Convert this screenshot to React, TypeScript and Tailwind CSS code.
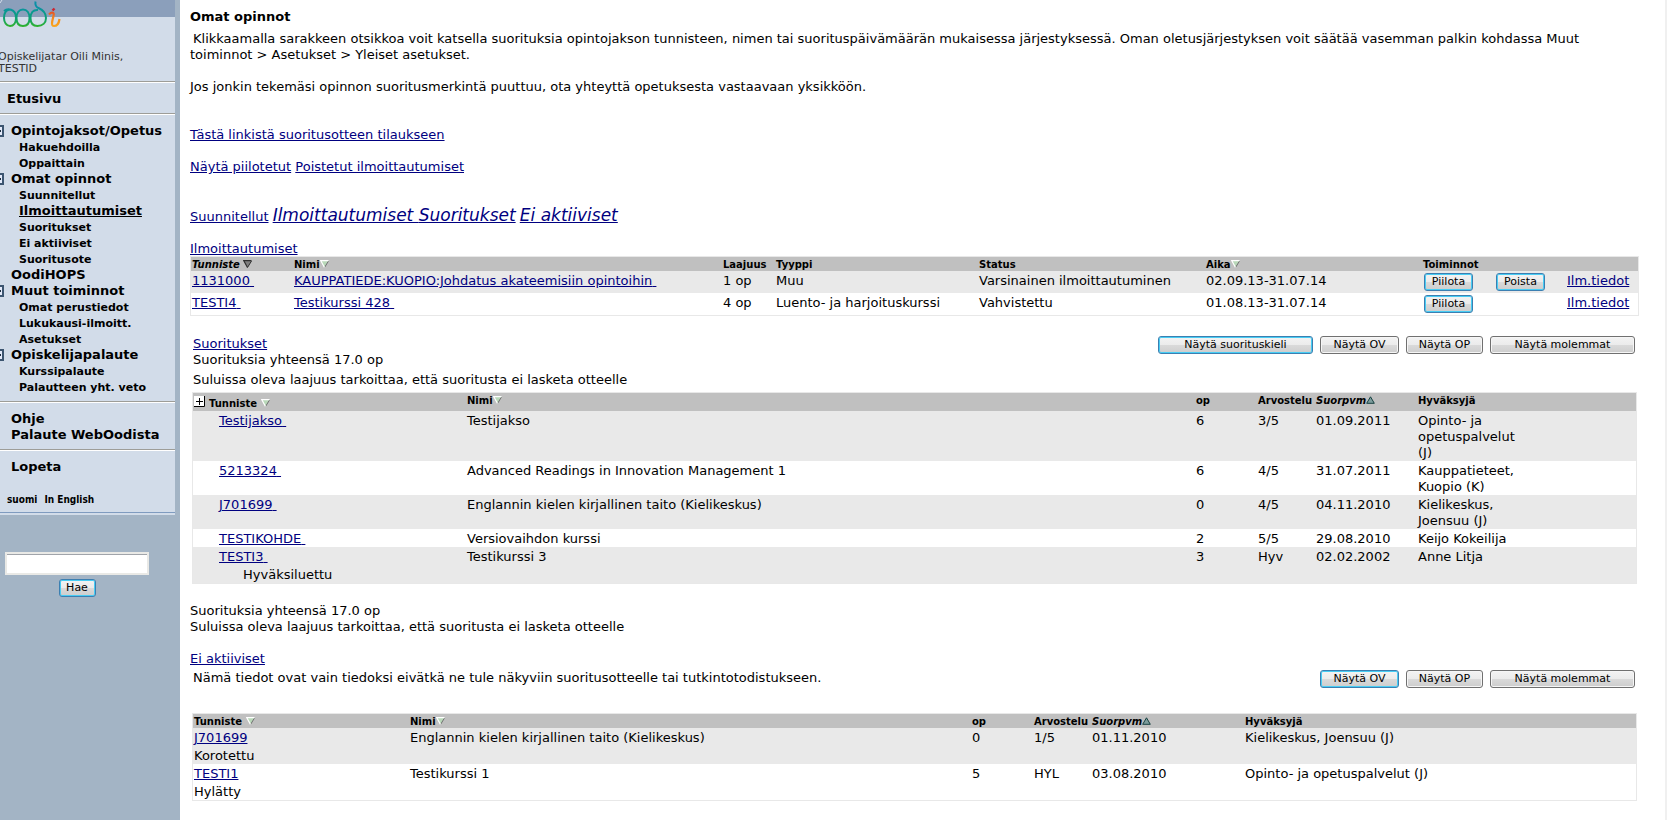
import React from "react";

const link = "text-[#000080] underline";
const head = "text-left align-top text-[10px] leading-[12px] font-bold whitespace-nowrap px-[2px] pt-[2px] first:pl-px";
const cell = "text-left align-top font-normal px-[2px] pt-[2px] first:pl-px";

function SortDown({ dark = false }: { dark?: boolean }) {
  return (
    <svg width="9" height="8" viewBox="0 0 9 8" className="inline-block align-baseline" aria-hidden="true">
      <path d="M0.5 0.5H8.5L4.5 7.5Z" fill={dark ? "#808080" : "#b9d8b9"} />
      <path d="M8.5 1L4.5 7.5" stroke={dark ? "#303030" : "#707070"} fill="none" />
      <path d="M8.5 0.6H0.7L4.5 7.5" stroke={dark ? "#303030" : "#ffffff"} strokeWidth="1.2" fill="none" />
    </svg>
  );
}

function SortUp() {
  return (
    <svg width="9" height="8" viewBox="0 0 9 8" className="inline-block align-baseline" aria-hidden="true">
      <path d="M4.5 0.8L8.3 7.3H0.7Z" fill="#7d9d9d" stroke="#174040" />
    </svg>
  );
}

function Button({ children, className = "", active = false }: { children: React.ReactNode; className?: string; active?: boolean }) {
  return (
    <button
      type="button"
      className={`h-[18px] rounded-[3px] border text-[11px] leading-[16px] whitespace-nowrap bg-[linear-gradient(#f3f3f3_0%,#ebebeb_50%,#dadada_50%,#cdcdcd_100%)] ${
        active ? "border-[#3c7fb1] shadow-[inset_0_0_0_1px_#48cdf4]" : "border-[#707070] shadow-[inset_0_0_0_1px_#f6f6f6]"
      } ${className}`}
    >
      {children}
    </button>
  );
}

function Logo() {
  return (
    <svg width="62" height="30" viewBox="0 0 62 30" className="block" role="img" aria-label="Oodi">
      <defs>
        <linearGradient id="loops" x1="0" y1="6" x2="0" y2="28" gradientUnits="userSpaceOnUse">
          <stop offset="0" stopColor="#0b90a8" />
          <stop offset="0.5" stopColor="#0aa07c" />
          <stop offset="1" stopColor="#35b420" />
        </linearGradient>
        <linearGradient id="tail" x1="0" y1="10" x2="0" y2="27" gradientUnits="userSpaceOnUse">
          <stop offset="0" stopColor="#e0452b" />
          <stop offset="0.5" stopColor="#f58a1c" />
          <stop offset="1" stopColor="#f9a820" />
        </linearGradient>
      </defs>
      <path d="M0 3L2 0" stroke="#d3dde9" fill="none" />
      <g fill="none" stroke="url(#loops)" strokeWidth="2">
        <path d="M4 11C7 8.500 16 8 16 18C16 23 13.500 26 10 26C6.500 26 4 22.500 4 18C4 13 6.500 10 9.500 9.500" />
        <path d="M16.500 18C16.500 13 19 9.500 23 9.500C27 9.500 29.500 13 29.500 18C29.500 23 27 26 23 26C19 26 16.500 23 16.500 18Z" />
        <path d="M38 10C33 9.500 30.500 13 30.500 18C30.500 23 33 26 37.500 26C42.500 26 46 23 46 18C46 12 42 9.500 38.500 8C36 7 35 5 35.500 1.500" />
      </g>
      <path d="M49 14.500C52 11.500 54.500 12.500 53.500 16C52.500 20 50.500 26 54 26C57 26 59 23 59.500 19" fill="none" stroke="url(#tail)" strokeWidth="2.2" />
      <path d="M52.500 10.500L54.500 8.500" stroke="#cc2430" strokeWidth="2.4" />
    </svg>
  );
}

function Fold() {
  return (
    <svg width="4" height="12" viewBox="0 0 4 12" className="mr-[7px] shrink-0" aria-hidden="true">
      <path d="M0 1H3V11H0" fill="#e3eafa" stroke="#3c5570" strokeWidth="2" />
      <path d="M0 6H1" stroke="#203040" strokeWidth="2" />
    </svg>
  );
}

type Item = { text: string; kind: "group" | "plain" | "sub" | "current" };
const menu: Item[] = [
  { text: "Opintojaksot/Opetus", kind: "group" },
  { text: "Hakuehdoilla", kind: "sub" },
  { text: "Oppaittain", kind: "sub" },
  { text: "Omat opinnot", kind: "group" },
  { text: "Suunnitellut", kind: "sub" },
  { text: "Ilmoittautumiset", kind: "current" },
  { text: "Suoritukset", kind: "sub" },
  { text: "Ei aktiiviset", kind: "sub" },
  { text: "Suoritusote", kind: "sub" },
  { text: "OodiHOPS", kind: "plain" },
  { text: "Muut toiminnot", kind: "group" },
  { text: "Omat perustiedot", kind: "sub" },
  { text: "Lukukausi-ilmoitt.", kind: "sub" },
  { text: "Asetukset", kind: "sub" },
  { text: "Opiskelijapalaute", kind: "group" },
  { text: "Kurssipalaute", kind: "sub" },
  { text: "Palautteen yht. veto", kind: "sub" },
];

const itemClass = {
  group: "text-[13px]",
  plain: "text-[13px] pl-[11px]",
  sub: "text-[11px] pl-[19px] pt-px",
  current: "text-[13px] pl-[19px] underline",
};

function Rule() {
  return <hr className="h-[2px] border-0 border-t border-t-[#9d9d98] bg-white" />;
}

function Sidebar() {
  return (
    <aside className="w-[180px] shrink-0 overflow-hidden bg-[#a3b4c5]">
      <div className="mr-[5px] border-b-2 border-[#d2dce9] bg-[#d2dce9]">
        <div className="border-b border-[#7f9bbf] bg-[linear-gradient(#8b9fbb_17px,transparent_17px)]">
          <div className="h-[51px]">
            <Logo />
          </div>
          <p className="-ml-[2px] h-[30px] text-[11px] leading-[12px] text-[#333]">
            Opiskelijatar Oili Minis,
            <br />
            TESTID
          </p>
          <Rule />
          <nav className="font-bold whitespace-nowrap">
            <a href="#etusivu" className="block h-[30px] pt-2 pl-[7px]">Etusivu</a>
            <Rule />
            <ul className="pt-2 pb-[6px]">
              {menu.map((m) => (
                <li key={m.text} className="h-4">
                  <a href="#valikko" className={`flex items-center ${itemClass[m.kind]}`}>
                    {m.kind === "group" && <Fold />}
                    {m.text}
                  </a>
                </li>
              ))}
            </ul>
            <Rule />
            <div className="flex flex-col pt-2 pb-[6px] pl-[11px]">
              <a href="#ohje">Ohje</a>
              <a href="#palaute">Palaute WebOodista</a>
            </div>
            <Rule />
            <a href="#lopeta" className="block pt-2 pl-[11px]">Lopeta</a>
            <div className="flex gap-[7px] pt-[17px] pb-[4px] pl-[7px] font-['DejaVu_Sans_Condensed','DejaVu_Sans',sans-serif] text-[10px]">
              <a href="#fi">suomi</a>
              <a href="#en">In English</a>
            </div>
          </nav>
        </div>
      </div>
      <form className="mt-[37px] ml-[5px] flex w-[144px] flex-col items-center" onSubmit={(e) => e.preventDefault()}>
        <input aria-label="Haku" type="text" className="h-[23px] w-full border-2 border-[#e9e9e6] bg-white px-1 shadow-[inset_0_1px_0_#a0a4aa]" />
        <Button active className="mt-1 w-[37px]">Hae</Button>
      </form>
    </aside>
  );
}

const enrolments = [
  { id: "1131000", name: "KAUPPATIEDE:KUOPIO:Johdatus akateemisiin opintoihin", size: "1 op", type: "Muu", status: "Varsinainen ilmoittautuminen", time: "02.09.13-31.07.14", removable: true },
  { id: "TESTI4", name: "Testikurssi 428", size: "4 op", type: "Luento- ja harjoituskurssi", status: "Vahvistettu", time: "01.08.13-31.07.14", removable: false },
];

const credits = [
  ["Testijakso", "Testijakso", "6", "3/5", "01.09.2011", "Opinto- ja opetuspalvelut (J)", ""],
  ["5213324", "Advanced Readings in Innovation Management 1", "6", "4/5", "31.07.2011", "Kauppatieteet, Kuopio (K)", ""],
  ["J701699", "Englannin kielen kirjallinen taito (Kielikeskus)", "0", "4/5", "04.11.2010", "Kielikeskus, Joensuu (J)", ""],
  ["TESTIKOHDE", "Versiovaihdon kurssi", "2", "5/5", "29.08.2010", "Keijo Kokeilija", ""],
  ["TESTI3", "Testikurssi 3", "3", "Hyv", "02.02.2002", "Anne Litja", "Hyväksiluettu"],
];

const inactive = [
  ["J701699", "Englannin kielen kirjallinen taito (Kielikeskus)", "0", "1/5", "01.11.2010", "Kielikeskus, Joensuu (J)", "Korotettu"],
  ["TESTI1", "Testikurssi 1", "5", "HYL", "03.08.2010", "Opinto- ja opetuspalvelut (J)", "Hylätty"],
];

export default function App() {
  return (
    <div className="flex min-h-screen bg-white font-['DejaVu_Sans',Verdana,sans-serif] text-[13px] leading-4 text-black">
      <Sidebar />
      <main className="min-w-0 flex-1 border-r-2 border-[#f0f0f0] pt-[9px] pr-[26px] pl-[10px]">
        <h1 className="font-bold">Omat opinnot</h1>
        <p className="mt-[6px] indent-[3px]">
          Klikkaamalla sarakkeen otsikkoa voit katsella suorituksia opintojakson tunnisteen, nimen tai suorituspäivämäärän
          mukaisessa järjestyksessä. Oman oletusjärjestyksen voit säätää vasemman palkin kohdassa Muut toiminnot &gt;
          Asetukset &gt; Yleiset asetukset.
        </p>
        <p className="mt-4">Jos jonkin tekemäsi opinnon suoritusmerkintä puuttuu, ota yhteyttä opetuksesta vastaavaan yksikköön.</p>
        <p className="mt-8"><a href="#tilaus" className={link}>Tästä linkistä suoritusotteen tilaukseen</a></p>
        <p className="mt-4">
          <a href="#piilotetut" className={link}>Näytä piilotetut</a> <a href="#poistetut" className={link}>Poistetut ilmoittautumiset</a>
        </p>
        <p className="mt-[30px] h-[20px] leading-[20px]">
          <a href="#suunnitellut" className={link}>Suunnitellut</a>{" "}
          <a href="#ilmoittautumiset" className={`${link} text-[17px] leading-[20px] italic`}>Ilmoittautumiset </a>
          <a href="#suoritukset" className={`${link} text-[17px] leading-[20px] italic`}>Suoritukset</a>{" "}
          <a href="#eiaktiiviset" className={`${link} text-[17px] leading-[20px] italic`}>Ei aktiiviset</a>
        </p>

        <h2 id="ilmoittautumiset" className="mt-4 h-[15px]"><a href="#ilmoittautumiset" className={link}>Ilmoittautumiset</a></h2>
        <table className="w-full table-fixed border-separate border-spacing-0 border border-[#e8e8e8]">
          <colgroup>
            <col className="w-[101px]" />
            <col />
            <col className="w-[53px]" />
            <col className="w-[203px]" />
            <col className="w-[227px]" />
            <col className="w-[217px]" />
            <col className="w-[72px]" />
            <col className="w-[72px]" />
            <col className="w-[73px]" />
          </colgroup>
          <thead>
            <tr className="bg-[#c0c0c0]">
              <th className={head}><i>Tunniste</i> <SortDown dark /></th>
              <th className={head}>Nimi<SortDown /></th>
              <th className={head}>Laajuus</th>
              <th className={head}>Tyyppi</th>
              <th className={head}>Status</th>
              <th className={head}>Aika<SortDown /></th>
              <th className={head} colSpan={3}>Toiminnot</th>
            </tr>
          </thead>
          <tbody>
            {enrolments.map((e) => (
              <tr key={e.id} className="h-[22px] odd:bg-[#e9e9e9]">
                <td className={cell}><a href="#kurssi" className={link}>{e.id}&nbsp;</a></td>
                <td className={cell}><a href="#kurssi" className={link}>{e.name}&nbsp;</a></td>
                <td className={cell}>{e.size}</td>
                <td className={cell}>{e.type}</td>
                <td className={cell}>{e.status}</td>
                <td className={cell}>{e.time}</td>
                <td className="px-[3px] pt-[2px] align-top"><Button active className="block w-[49px]">Piilota</Button></td>
                <td className="px-[3px] pt-[2px] align-top">{e.removable && <Button active className="block w-[49px]">Poista</Button>}</td>
                <td className={cell}><a href="#tiedot" className={link}>Ilm.tiedot</a></td>
              </tr>
            ))}
          </tbody>
        </table>

        <div className="mt-[20px] flex items-start justify-between pr-1 pl-[3px]">
          <div>
            <h2 id="suoritukset"><a href="#suoritukset" className={link}>Suoritukset</a></h2>
            <p>Suorituksia yhteensä 17.0 op</p>
            <p className="mt-1">Suluissa oleva laajuus tarkoittaa, että suoritusta ei lasketa otteelle</p>
          </div>
          <div className="flex gap-[7px]">
            <Button active className="w-[155px]">Näytä suorituskieli</Button>
            <Button className="w-[79px]">Näytä OV</Button>
            <Button className="w-[77px]">Näytä OP</Button>
            <Button className="w-[145px]">Näytä molemmat</Button>
          </div>
        </div>
        <div className="mt-1 pr-[2px] pl-[2px]">
          <table className="w-full table-fixed border-separate border-spacing-0 border border-[#e8e8e8]">
            <colgroup>
              <col className="w-[272px]" />
              <col />
              <col className="w-[62px]" />
              <col className="w-[58px]" />
              <col className="w-[102px]" />
              <col className="w-[104px]" />
              <col className="w-[116px]" />
            </colgroup>
            <thead>
              <tr className="h-[18px] bg-[#c0c0c0]">
                <th className={head}>
                  <div className="flex">
                    <button type="button" aria-label="Avaa kaikki" className="mt-px mr-1 size-[11px]">
                      <svg width="11" height="11" viewBox="0 0 11 11" className="block" aria-hidden="true">
                        <path d="M0 0H11V11H0Z" fill="#fff" />
                        <path d="M0 10.5H10.5V0M5.5 2V9M2 5.5H9" stroke="#000" fill="none" />
                      </svg>
                    </button>
                    <span className="pt-[3px]">Tunniste <SortDown /></span>
                  </div>
                </th>
                <th className={head}>Nimi<SortDown /></th>
                <th className={head}>op</th>
                <th className={head}>Arvostelu</th>
                <th className={head}><i>Suorpvm</i><SortUp /></th>
                <th className={head}>Hyväksyjä</th>
                <th />
              </tr>
            </thead>
            <tbody>
              {credits.map(([id, name, op, grade, date, by, note]) => (
                <tr key={id} className="odd:bg-[#e9e9e9]">
                  <td className={cell}>
                    <a href="#kurssi" className={`${link} ml-[25px]`}>{id}&nbsp;</a>
                    {note && <div className="mt-[2px] pl-[49px]">{note}</div>}
                  </td>
                  <td className={cell}>{name}</td>
                  <td className={cell}>{op}</td>
                  <td className={cell}>{grade}</td>
                  <td className={cell}>{date}</td>
                  <td className={cell}>{by}</td>
                  <td />
                </tr>
              ))}
            </tbody>
          </table>
        </div>

        <p className="mt-[19px]">Suorituksia yhteensä 17.0 op</p>
        <p>Suluissa oleva laajuus tarkoittaa, että suoritusta ei lasketa otteelle</p>
        <h2 id="eiaktiiviset" className="mt-4"><a href="#eiaktiiviset" className={link}>Ei aktiiviset</a></h2>
        <div className="mt-[3px] flex items-start justify-between pr-1 pl-[3px]">
          <p>Nämä tiedot ovat vain tiedoksi eivätkä ne tule näkyviin suoritusotteelle tai tutkintotodistukseen.</p>
          <div className="flex gap-[7px]">
            <Button active className="w-[79px]">Näytä OV</Button>
            <Button className="w-[77px]">Näytä OP</Button>
            <Button className="w-[145px]">Näytä molemmat</Button>
          </div>
        </div>
        <div className="mt-[25px] pr-[2px] pb-4 pl-[2px]">
          <table className="w-full table-fixed border-separate border-spacing-0 border border-[#e8e8e8]">
            <colgroup>
              <col className="w-[215px]" />
              <col />
              <col className="w-[62px]" />
              <col className="w-[58px]" />
              <col className="w-[153px]" />
              <col className="w-[393px]" />
            </colgroup>
            <thead>
              <tr className="bg-[#c0c0c0]">
                <th className={head}>Tunniste <SortDown /></th>
                <th className={head}>Nimi<SortDown /></th>
                <th className={head}>op</th>
                <th className={head}>Arvostelu</th>
                <th className={head}><i>Suorpvm</i><SortUp /></th>
                <th className={head}>Hyväksyjä</th>
              </tr>
            </thead>
            <tbody>
              {inactive.map(([id, name, op, grade, date, by, note]) => (
                <tr key={id} className="odd:bg-[#e9e9e9]">
                  <td className={cell}>
                    <a href="#kurssi" className={link}>{id}</a>
                    <div className="mt-[2px]">{note}</div>
                  </td>
                  <td className={cell}>{name}</td>
                  <td className={cell}>{op}</td>
                  <td className={cell}>{grade}</td>
                  <td className={cell}>{date}</td>
                  <td className={cell}>{by}</td>
                </tr>
              ))}
            </tbody>
          </table>
        </div>
      </main>
    </div>
  );
}
